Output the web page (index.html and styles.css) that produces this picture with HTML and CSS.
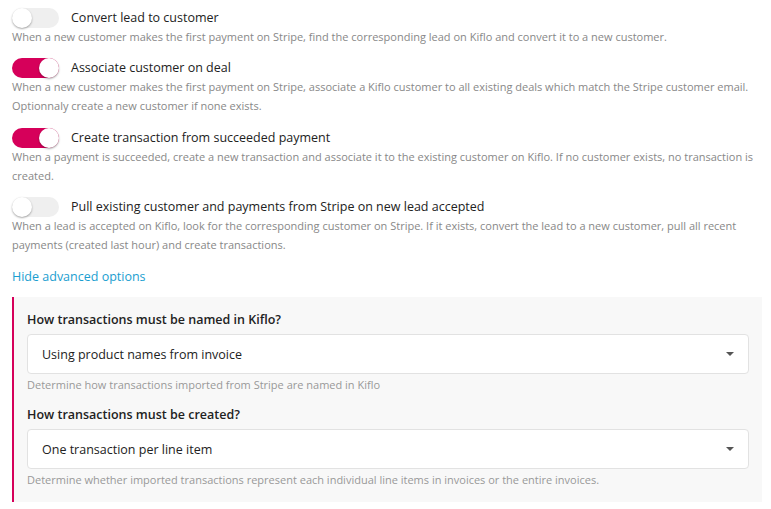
FILE: index.html
```html
<!DOCTYPE html>
<html>
<head>
<meta charset="utf-8">
<link rel="stylesheet" href="styles.css">
</head>
<body>
<div class="page">
  <div class="option">
    <div class="option-head">
      <span class="toggle"><span class="knob"></span></span>
      <span class="option-title">Convert lead to customer</span>
    </div>
    <p class="option-desc">When a new customer makes the first payment on Stripe, find the corresponding lead on Kiflo and convert it to a new customer.</p>
  </div>
  <div class="option">
    <div class="option-head">
      <span class="toggle on"><span class="knob"></span></span>
      <span class="option-title">Associate customer on deal</span>
    </div>
    <p class="option-desc">When a new customer makes the first payment on Stripe, associate a Kiflo customer to all existing deals which match the Stripe customer email. Optionnaly create a new customer if none exists.</p>
  </div>
  <div class="option">
    <div class="option-head">
      <span class="toggle on"><span class="knob"></span></span>
      <span class="option-title">Create transaction from succeeded payment</span>
    </div>
    <p class="option-desc">When a payment is succeeded, create a new transaction and associate it to the existing customer on Kiflo. If no customer exists, no transaction is created.</p>
  </div>
  <div class="option last">
    <div class="option-head">
      <span class="toggle"><span class="knob"></span></span>
      <span class="option-title">Pull existing customer and payments from Stripe on new lead accepted</span>
    </div>
    <p class="option-desc">When a lead is accepted on Kiflo, look for the corresponding customer on Stripe. If it exists, convert the lead to a new customer, pull all recent payments (created last hour) and create transactions.</p>
  </div>
  <a class="advanced-link" href="#">Hide advanced options</a>
  <div class="advanced">
    <div class="field">
      <div class="field-label">How transactions must be named in Kiflo?</div>
      <div class="select"><span>Using product names from invoice</span><span class="caret"></span></div>
      <div class="field-help">Determine how transactions imported from Stripe are named in Kiflo</div>
    </div>
    <div class="field">
      <div class="field-label">How transactions must be created?</div>
      <div class="select"><span>One transaction per line item</span><span class="caret"></span></div>
      <div class="field-help">Determine whether imported transactions represent each individual line items in invoices or the entire invoices.</div>
    </div>
  </div>
</div>
</body>
</html>
```

FILE: styles.css
```css
html, body {
  margin: 0;
  padding: 0;
  background: #ffffff;
}
body {
  font-family: "Open Sans", "Noto Sans", sans-serif;
  color: #333333;
}
.page {
  padding: 8px 9px 0 12px;
}
.option {
  margin-bottom: 12px;
}
.option:nth-child(2) {
  margin-bottom: 13px;
}
.option.last {
  margin-bottom: 14px;
}
.option-head {
  display: flex;
  align-items: center;
  gap: 12px;
  height: 19px;
}
.toggle {
  position: relative;
  width: 47px;
  height: 20px;
  border-radius: 10px;
  background: #efefef;
  flex: none;
}
.toggle .knob {
  position: absolute;
  top: 0;
  left: 0;
  width: 20px;
  height: 20px;
  border-radius: 50%;
  background: #ffffff;
  box-shadow: 0 1px 2px rgba(0,0,0,0.35);
}
.toggle.on {
  background: #d6005a;
}
.toggle.on .knob {
  left: 27px;
}
.option-title {
  font-size: 12.5px;
  color: #222222;
}
.option-desc {
  margin: 0;
  font-size: 11px;
  line-height: 19px;
  color: #888888;
}
.advanced-link {
  display: block;
  font-size: 12.5px;
  color: #1a9ed0;
  text-decoration: none;
  line-height: 18px;
}
.advanced {
  margin-top: 11px;
  background: #f8f8f8;
  border-left: 2px solid #d6005a;
  padding: 15px 13px 15px 13px;
}
.field + .field {
  margin-top: 15px;
}
.field-label {
  font-size: 12.5px;
  font-weight: 600;
  color: #222222;
  line-height: 16px;
  margin-bottom: 6px;
}
.select {
  display: flex;
  align-items: center;
  justify-content: space-between;
  height: 38px;
  background: #ffffff;
  border: 1px solid #e2e2e2;
  border-radius: 4px;
  padding: 0 14px 0 14px;
  font-size: 12.5px;
  color: #222222;
}
.caret {
  width: 0;
  height: 0;
  border-left: 4px solid transparent;
  border-right: 4px solid transparent;
  border-top: 4px solid #555555;
}
.field-help {
  font-size: 11px;
  color: #999999;
  margin-top: 3px;
  line-height: 15px;
}
```
